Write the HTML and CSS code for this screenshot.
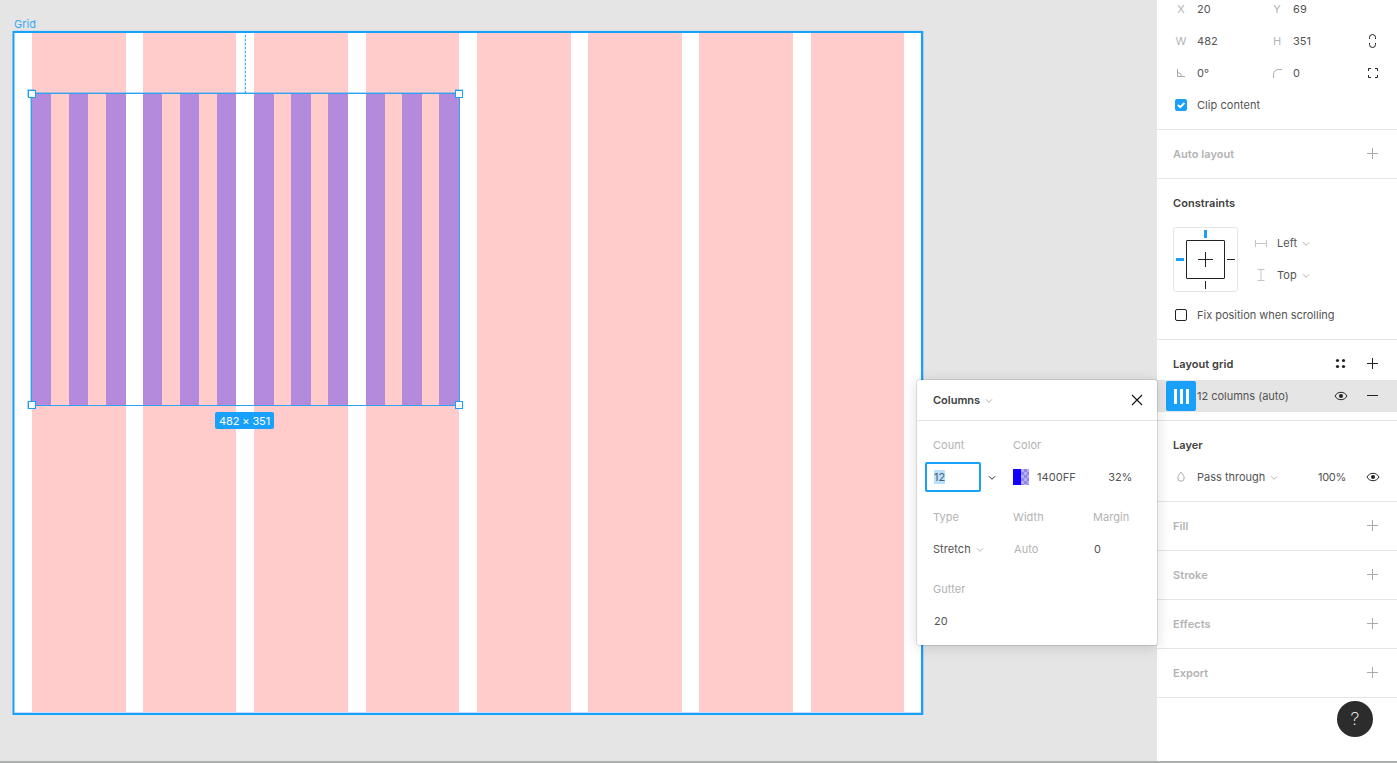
FILE: index.html
```html
<!DOCTYPE html>
<html lang="en">
<head>
<meta charset="utf-8">
<title>Layout grid</title>
<link rel="stylesheet" href="styles.css">
</head>
<body>
<svg class="defs" aria-hidden="true">
  <symbol id="plus" viewBox="0 0 32 32"><path d="M15.5 10v11M10 15.5h11"/></symbol>
  <symbol id="eye" viewBox="0 0 32 32"><path d="M10 16c1.3-2.5 3.5-3.7 6-3.7s4.700 1.200 6 3.700c-1.300 2.500-3.500 3.700-6 3.700s-4.700-1.200-6-3.700z"/><circle class="solid" cx="16" cy="16" r="2"/></symbol>
  <symbol id="chev" viewBox="0 0 8 6"><path d="M1 1.300l3 3 3-3"/></symbol>
</svg>
<div class="app">
  <main class="canvas">
    <div class="frame-label">Grid</div>
    <div class="frame">
      <div class="frame-grid"><i></i><i class="slim"></i><i></i><i class="slim"></i><i></i><i></i><i></i><i class="slim"></i></div>
    </div>
    <div class="guide"></div>
    <div class="selection">
      <div class="selection-grid"><i class="slim"></i><i class="slim"></i><i></i><i class="slim"></i><i class="slim"></i><i class="slim"></i><i></i><i></i><i></i><i class="slim"></i><i></i><i></i></div>
      <b class="handle nw"></b><b class="handle ne"></b><b class="handle sw"></b><b class="handle se"></b>
    </div>
    <div class="size-badge">482 × 351</div>
  </main>

  <aside class="panel">
    <section class="section transform">
      <div class="row"><span class="tag">X</span><span class="wide">20</span><span class="tag">Y</span><span class="wide">69</span></div>
      <div class="row"><span class="tag">W</span><span class="wide">482</span><span class="tag">H</span><span class="wide">351</span>
        <svg class="icon dark"><path d="M12.500 14v-1.500a3 3 0 0 1 6 0V14M12.500 18v1.500a3 3 0 0 0 6 0V18"/></svg></div>
      <div class="row"><svg class="icon light"><path d="M12.500 12v7.500H20M12.500 15.500a4 4 0 0 1 4 4"/></svg><span class="wide">0°</span>
        <svg class="icon light"><path d="M12.500 21v-3.500a5 5 0 0 1 5-5H21"/></svg><span class="wide">0</span>
        <svg class="icon dark"><path d="M11.500 14v-2.500H14M18 11.500h2.500V14M20.500 18v2.500H18M14 20.500h-2.500V18"/></svg></div>
      <div class="row"><span class="cell"><span class="checkbox checked"><svg viewBox="0 0 12 12"><path d="M2.800 5.800l2.400 2.400 4.200-4.200"/></svg></span></span><span>Clip content</span></div>
    </section>
    <section class="section"><div class="head muted"><h2>Auto layout</h2><svg class="icon light"><use href="#plus"/></svg></div></section>
    <section class="section">
      <div class="head"><h2>Constraints</h2></div>
      <div class="constraints">
        <svg class="constraint-box" viewBox="0 0 65 65">
          <rect class="outer" x=".5" y=".5" width="64" height="64" rx="2"/>
          <rect class="inner" x="13.500" y="13.500" width="38" height="38" rx=".5"/>
          <path class="inner" d="M32.500 25v15M25 32.500h15M54 32.500h8M32.500 54v8"/>
          <path class="active" d="M32.500 3v8M3 32.500h8"/>
        </svg>
        <div class="pins">
          <div class="pin"><svg class="icon pale"><path d="M10.500 13v7M21.500 13v7M10.500 16.500h11"/></svg>Left<svg class="chev"><use href="#chev"/></svg></div>
          <div class="pin"><svg class="icon pale"><path d="M12.500 10.500h7M12.500 21.500h7M16 10.500v11"/></svg>Top<svg class="chev"><use href="#chev"/></svg></div>
        </div>
      </div>
      <div class="row"><span class="cell"><span class="checkbox"></span></span><span class="tight">Fix position when scrolling</span></div>
    </section>
    <section class="section">
      <div class="head"><h2>Layout grid</h2>
        <svg class="icon dots"><circle cx="12.500" cy="12.500" r="1.600"/><circle cx="18.500" cy="12.500" r="1.600"/><circle cx="12.500" cy="18.500" r="1.600"/><circle cx="18.500" cy="18.500" r="1.600"/></svg>
        <svg class="icon dark"><use href="#plus"/></svg></div>
      <div class="row chosen"><span class="cell"><span class="grid-tile"><i></i><i></i><i></i></span></span><span class="name tight">12 columns (auto)</span>
        <svg class="icon dark"><use href="#eye"/></svg><svg class="icon dark"><path d="M10 15.500h11"/></svg></div>
    </section>
    <section class="section">
      <div class="head"><h2>Layer</h2></div>
      <div class="row"><svg class="icon light"><path d="M16 11.200c1.800 2.200 3.200 3.900 3.200 5.800a3.200 3.300 0 0 1-6.400 0c0-1.900 1.400-3.600 3.200-5.800z"/></svg>
        <span class="blend">Pass through<svg class="chev"><use href="#chev"/></svg></span><span class="opacity">100%</span>
        <svg class="icon dark"><use href="#eye"/></svg></div>
    </section>
    <section class="section"><div class="head muted"><h2>Fill</h2><svg class="icon light"><use href="#plus"/></svg></div></section>
    <section class="section"><div class="head muted"><h2>Stroke</h2><svg class="icon light"><use href="#plus"/></svg></div></section>
    <section class="section"><div class="head muted"><h2>Effects</h2><svg class="icon light"><use href="#plus"/></svg></div></section>
    <section class="section"><div class="head muted"><h2>Export</h2><svg class="icon light"><use href="#plus"/></svg></div></section>
  </aside>
</div>

<div class="popover">
  <header class="popover-head"><h2>Columns</h2><svg class="chev"><use href="#chev"/></svg>
    <svg class="close" viewBox="0 0 12 12"><path d="M1 1l10 10M11 1L1 11"/></svg></header>
  <div class="fields">
    <span class="label">Count</span><span class="label">Color</span><span></span>
    <div class="count"><span class="count-input"><mark>12</mark></span><svg class="chev strong"><use href="#chev"/></svg></div>
    <div class="color"><span class="swatch"><i></i><i></i></span><span>1400FF</span><span class="alpha">32%</span></div>
  </div>
  <div class="fields">
    <span class="label">Type</span><span class="label">Width</span><span class="label">Margin</span>
    <span class="choice">Stretch<svg class="chev"><use href="#chev"/></svg></span><span class="value label">Auto</span><span class="value">0</span>
  </div>
  <div class="fields">
    <span class="label">Gutter</span><span></span><span></span>
    <span class="value">20</span>
  </div>
</div>
<button class="help">?</button>
<div class="bottom-edge"></div>
</body>
</html>
```
FILE: styles.css
```css
* { box-sizing: border-box; }
body {
  margin: 0;
  width: 1397px;
  height: 763px;
  overflow: hidden;
  position: relative;
  font: 11px/16px Inter, "Liberation Sans", sans-serif;
  letter-spacing: 0.055px;
  color: #545454;
  background: #e5e5e5;
}
h2 { margin: 0; font-size: 11px; line-height: 16px; font-weight: 600; color: #404040; }
svg { display: block; flex: none; fill: none; stroke: currentColor; }
.defs { position: absolute; width: 0; height: 0; }
.solid { fill: currentColor; stroke: none; }
.tight { letter-spacing: -0.015px; }
.app { display: flex; height: 763px; }

/* Canvas */
.canvas { position: relative; flex: 1; background: #e5e5e5; }
.frame-label { position: absolute; left: 14px; top: 16px; letter-spacing: 0; color: #34a8f5; }
.frame {
  position: absolute;
  left: 13px;
  top: 31px;
  width: 910px;
  height: 684px;
  border: 2px solid #18a0fb;
  border-left-width: 1px;
  background: #fff;
  box-shadow: -1px 0 #7cc1ef, 1px 0 #a8cfe9, 0 -1px #cfdde6, inset 1px 0 #8fd0fd, inset 0 -1px #c9dcf2;
}
.frame-grid {
  display: grid;
  grid-template-columns: 111px 111px 112px 111px 111px 111px 112px 93px;
  padding-left: 18px;
  height: 679px;
}
.frame-grid i { width: 94px; background: #ffcccb; }
.frame-grid .slim { width: 93px; }
.guide {
  position: absolute;
  left: 245px;
  top: 35px;
  width: 1px;
  height: 58px;
  background: repeating-linear-gradient(#38abf8 0 2px, #d5edfd 2px 4px);
  box-shadow: -1px 0 rgba(24, 160, 251, .16);
}
.selection {
  position: absolute;
  left: 31px;
  top: 93px;
  width: 429px;
  height: 313px;
  border: 1px solid #2fa3f2;
  box-shadow: -1px -1px rgba(24, 160, 251, .4);
}
.selection-grid {
  display: grid;
  grid-template-columns: repeat(8, 37px) 38px 36px 37px 20px;
  height: 100%;
}
.selection-grid i { width: 20px; background: #b48add; }
.selection-grid .slim { width: 19px; }
.handle { position: absolute; width: 8px; height: 8px; border: 1px solid #18a0fb; background: #fff; }
.nw { left: -4px; top: -4px; box-shadow: -1px -1px rgba(24, 160, 251, .4); }
.ne { right: -4px; top: -4px; box-shadow: 0 -1px rgba(24, 160, 251, .4); }
.sw { left: -4px; bottom: -4px; box-shadow: -1px 0 rgba(24, 160, 251, .4); }
.se { right: -4px; bottom: -4px; }
.size-badge {
  position: absolute;
  left: 215px;
  top: 412px;
  width: 59px;
  height: 17px;
  line-height: 18px;
  border-radius: 2px;
  text-align: center;
  letter-spacing: -0.1px;
  color: #fff;
  background: #18a0fb;
}

/* Properties panel */
.panel { width: 240px; background: #fff; }
.section { padding: 8px; border-bottom: 1px solid #e5e5e5; }
.transform { height: 130px; display: flex; flex-direction: column; justify-content: flex-end; }
.row, .head { display: flex; align-items: center; height: 32px; flex: none; }
.head { padding-left: 8px; }
.head h2 { flex: 1; }
.muted h2 { color: #b3b3b3; }
.tag { width: 32px; text-align: center; color: #b3b3b3; }
.cell { width: 32px; display: flex; justify-content: center; }
.wide { width: 64px; }
.icon { width: 32px; height: 32px; }
.dark { color: #222; }
.light { color: #aaa; }
.pale { color: #c4c4c4; }
.dots { fill: #222; stroke: none; }
.chev { width: 8px; height: 6px; margin: 1px 0 0 5px; color: #b3b3b3; }
.strong { color: #333; }
.checkbox { width: 12px; height: 12px; border: 1px solid #222; border-radius: 2px; }
.checked { border: 0; background: #18a0fb; color: #fff; }
.checked svg { width: 12px; height: 12px; stroke-width: 1.800; }
.constraints { display: flex; gap: 7px; padding: 8px 0 0 8px; height: 80px; }
.constraint-box { width: 65px; height: 65px; }
.outer { stroke: #e5e5e5; }
.inner { stroke: #222; }
.active { stroke: #18a0fb; stroke-width: 3; }
.pin { display: flex; align-items: center; height: 32px; }
.chosen { margin: 0 -8px; padding: 0 8px; background: #e5e5e5; }
.grid-tile {
  display: flex;
  justify-content: center;
  align-items: center;
  gap: 3px;
  width: 30px;
  height: 30px;
  border-radius: 2px;
  background: #18a0fb;
}
.grid-tile i { width: 3px; height: 15px; background: #fff; }
.name, .blend { flex: 1; }
.blend { display: flex; align-items: center; letter-spacing: 0; }
.opacity { padding-right: 11px; letter-spacing: -0.3px; }

/* Column settings */
.popover {
  position: absolute;
  left: 917px;
  top: 380px;
  width: 240px;
  height: 265px;
  border-radius: 2px;
  background: #fff;
  box-shadow: 0 2px 14px rgba(0, 0, 0, .15), 0 0 0 .5px rgba(0, 0, 0, .2);
}
.popover-head {
  display: flex;
  align-items: center;
  height: 41px;
  padding: 0 14px 0 16px;
  letter-spacing: 0;
  border-bottom: 1px solid #e5e5e5;
}
.close { width: 12px; height: 12px; margin-left: auto; color: #111; stroke-width: 1.100; }
.fields {
  display: grid;
  grid-template-columns: repeat(3, 80px);
  grid-auto-rows: 32px;
  align-items: center;
  padding: 8px 0 0 16px;
}
.label { color: #b3b3b3; }
.value { padding-left: 1px; }
.choice, .count, .color { display: flex; align-items: center; }
.count-input {
  display: flex;
  align-items: center;
  width: 56px;
  height: 30px;
  margin-left: -8px;
  padding-left: 7px;
  border: 2px solid #18a0fb;
  border-radius: 2px;
}
.count .chev { margin-left: 7px; }
mark { line-height: 14px; color: #4a6070; background: #b9e1fd; }
.color { grid-column: span 2; }
.swatch { display: flex; width: 16px; height: 16px; margin-right: 8px; }
.swatch i { width: 8px; background: #1400ff; }
.swatch i + i { background: repeating-conic-gradient(#8f86e6 0 25%, #b3adff 0 50%) 0 0 / 6px 6px; }
.alpha { margin-left: auto; margin-right: 41px; letter-spacing: -0.2px; }

.help {
  position: absolute;
  left: 1337px;
  top: 701px;
  width: 36px;
  height: 36px;
  padding: 0;
  border: 0;
  border-radius: 50%;
  font: 200 18px/36px Inter, sans-serif;
  color: #fff;
  background: #2c2c2c;
}
.bottom-edge { position: absolute; left: 0; top: 761px; width: 1397px; height: 2px; background: #adafae; }
```
